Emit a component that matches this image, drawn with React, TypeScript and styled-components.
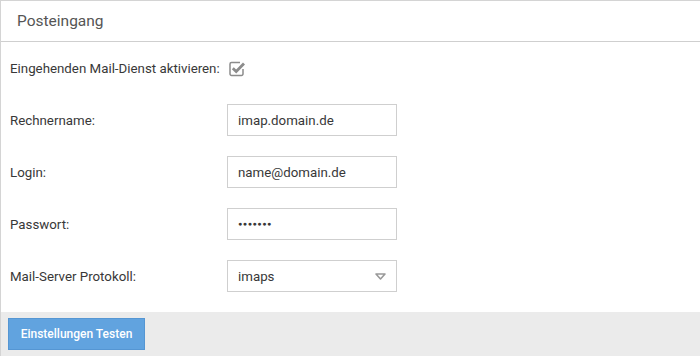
import React, { FC } from "react";
import styled, { createGlobalStyle } from "styled-components";

const GlobalStyle = createGlobalStyle`
  html, body {
    margin: 0;
    padding: 0;
    background: #fff;
    overflow: hidden;
  }
  body {
    font-family: Roboto, "Liberation Sans", Arial, sans-serif;
    color: #333;
  }
`;

const Panel = styled.section`
  width: 700px;
  height: 356px;
  box-sizing: border-box;
  border-left: 1px solid #d4d4d4;
  border-top: 1px solid #d4d4d4;
  display: flex;
  flex-direction: column;
`;

const Header = styled.header`
  height: 40px;
  display: flex;
  align-items: center;
  padding-left: 16px;
  border-bottom: 1px solid #cfcfcf;
  font-size: 15.5px;
  color: #555;
`;

const Body = styled.div`
  padding-bottom: 10px;
`;

const Row = styled.div`
  height: 52px;
  display: grid;
  grid-template-columns: 217px 170px;
  align-items: center;
  padding-left: 9px;
`;

const Label = styled.label`
  font-size: 13.3px;
  color: #383838;
`;

const Field = styled.div`
  height: 32px;
  box-sizing: border-box;
  border: 1px solid #cfcfcf;
  display: flex;
  align-items: center;
  justify-content: space-between;
  padding: 0 10px 0 10px;
  font-size: 13.3px;
  color: #383838;
`;

const Dots = styled.span`
  font-size: 7px;
  letter-spacing: 0.6px;
`;

const Check = styled.span`
  display: flex;
  align-items: center;
  padding-left: 1px;
`;

const Footer = styled.footer`
  flex: 1;
  background: #ebebeb;
  padding: 6px 7px;
`;

const Button = styled.button`
  height: 32px;
  width: 137px;
  border: 1px solid #5596d3;
  background: #61a3df;
  color: #fff;
  font-family: Roboto, "Liberation Sans", Arial, sans-serif;
  font-size: 12px;
  font-weight: 500;
  padding: 0;
  cursor: pointer;
`;

const CheckIcon: FC = () => (
  <svg width="18" height="17" viewBox="0 0 18 17">
    <path
      d="M12 2.5 H3.5 A1.5 1.5 0 0 0 2 4 V14 A1.5 1.5 0 0 0 3.5 15.5 H13.5 A1.5 1.5 0 0 0 15 14 V9"
      fill="none"
      stroke="#8c8c8c"
      strokeWidth="1.5"
    />
    <path d="M4.8 8.3 L8.2 11.6 L16 3.6" fill="none" stroke="#8c8c8c" strokeWidth="2.8" />
  </svg>
);

const Caret: FC = () => (
  <svg width="11" height="7" viewBox="0 0 11 7">
    <path d="M1 1 H10 L5.5 6 Z" fill="none" stroke="#999" strokeWidth="1.6" strokeLinejoin="round" />
  </svg>
);

const fields = [
  { label: "Rechnername:", value: "imap.domain.de" },
  { label: "Login:", value: "name@domain.de" },
];

const App: FC = () => (
  <>
    <GlobalStyle />
    <Panel>
      <Header>Posteingang</Header>
      <Body>
        <Row>
          <Label>Eingehenden Mail-Dienst aktivieren:</Label>
          <Check>
            <CheckIcon />
          </Check>
        </Row>
        {fields.map((f) => (
          <Row key={f.label}>
            <Label>{f.label}</Label>
            <Field>{f.value}</Field>
          </Row>
        ))}
        <Row>
          <Label>Passwort:</Label>
          <Field>
            <Dots>●●●●●●●</Dots>
          </Field>
        </Row>
        <Row>
          <Label>Mail-Server Protokoll:</Label>
          <Field>
            imaps
            <Caret />
          </Field>
        </Row>
      </Body>
      <Footer>
        <Button>Einstellungen Testen</Button>
      </Footer>
    </Panel>
  </>
);

export default App;
